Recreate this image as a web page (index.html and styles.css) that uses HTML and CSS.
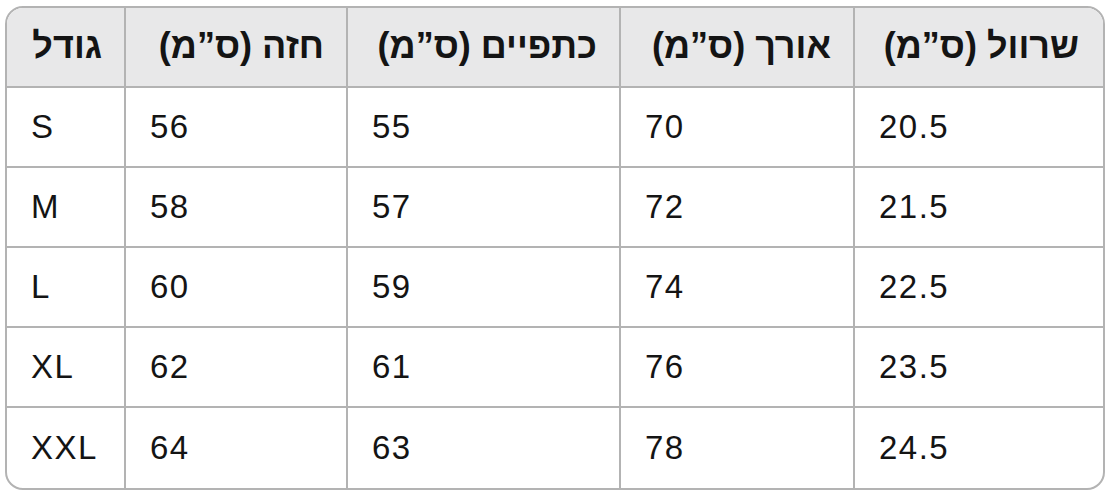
FILE: index.html
```html
<!DOCTYPE html>
<html lang="he">
<head>
<meta charset="utf-8">
<link rel="stylesheet" href="styles.css">
</head>
<body>
<table class="size-table">
  <colgroup>
    <col class="c1"><col class="c2"><col class="c3"><col class="c4"><col class="c5">
  </colgroup>
  <thead>
    <tr>
      <th>גודל</th>
      <th>חזה (ס”מ)</th>
      <th>כתפיים (ס”מ)</th>
      <th>אורך (ס”מ)</th>
      <th>שרוול (ס”מ)</th>
    </tr>
  </thead>
  <tbody>
    <tr><td>S</td><td>56</td><td>55</td><td>70</td><td>20.5</td></tr>
    <tr><td>M</td><td>58</td><td>57</td><td>72</td><td>21.5</td></tr>
    <tr><td>L</td><td>60</td><td>59</td><td>74</td><td>22.5</td></tr>
    <tr><td>XL</td><td>62</td><td>61</td><td>76</td><td>23.5</td></tr>
    <tr><td>XXL</td><td>64</td><td>63</td><td>78</td><td>24.5</td></tr>
  </tbody>
</table>
</body>
</html>
```

FILE: styles.css
```css
html, body {
  margin: 0;
  padding: 0;
  background: #ffffff;
}
body {
  padding: 6px 0 0 5px;
  font-family: "Liberation Sans", Arial, sans-serif;
  color: #141414;
}
.size-table {
  width: 1096px;
  table-layout: fixed;
  border-collapse: separate;
  border-spacing: 0;
  border: 2px solid #b3b3b3;
  border-radius: 18px;
  overflow: hidden;
}
.c1 { width: 119px; }
.c2 { width: 222px; }
.c3 { width: 273px; }
.c4 { width: 234px; }
.c5 { width: 248px; }
.size-table th,
.size-table td {
  height: 80px;
  padding: 0 24px;
  box-sizing: border-box;
  border-right: 2px solid #b3b3b3;
  border-bottom: 2px solid #b3b3b3;
  vertical-align: middle;
  white-space: nowrap;
}
.size-table th:last-child,
.size-table td:last-child {
  border-right: none;
}
.size-table tbody tr:last-child td {
  border-bottom: none;
}
.size-table th {
  background: #e8e8e9;
  font-weight: bold;
  font-size: 36px;
  direction: rtl;
  text-align: right;
  padding-right: 24px;
  padding-top: 0;
  padding-bottom: 3px;
}
.size-table td {
  font-size: 33px;
  text-align: left;
  padding-left: 24px;
  letter-spacing: 1.5px;
}
```
